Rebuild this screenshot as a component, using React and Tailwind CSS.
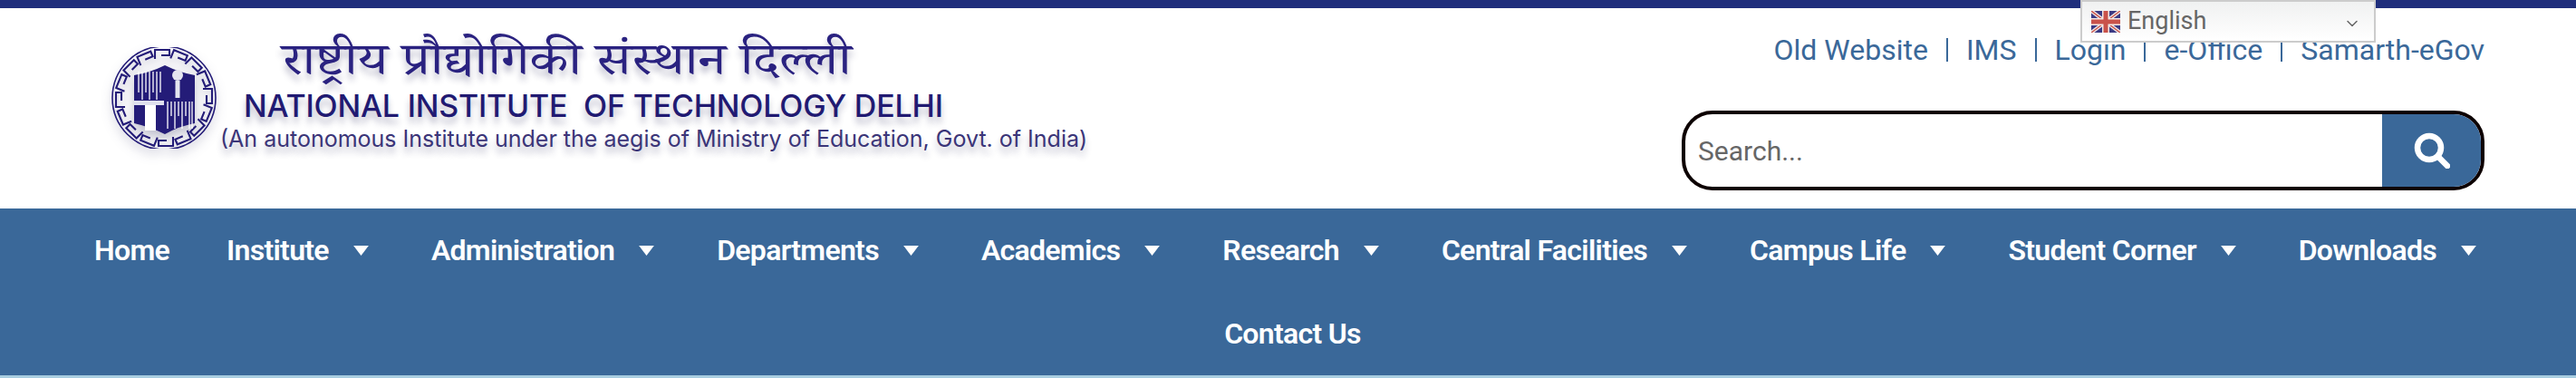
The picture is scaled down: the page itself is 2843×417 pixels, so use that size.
import React from 'react';
import { ChevronDown } from 'lucide-react';

const topLinks = ['Old Website', 'IMS', 'Login', 'e-Office', 'Samarth-eGov'];

const menu = [
  { label: 'Home' },
  { label: 'Institute', sub: true },
  { label: 'Administration', sub: true },
  { label: 'Departments', sub: true },
  { label: 'Academics', sub: true },
  { label: 'Research', sub: true },
  { label: 'Central Facilities', sub: true },
  { label: 'Campus Life', sub: true },
  { label: 'Student Corner', sub: true },
  { label: 'Downloads', sub: true },
  { label: 'Contact Us', last: true },
];

const keys = Array.from({ length: 16 }, (_, i) => i * 22.5);

const Emblem = () => (
  <svg viewBox="0 0 118 112" preserveAspectRatio="none" className="w-[118px] h-[112px] shrink-0 drop-shadow-[0_6px_6px_rgba(40,40,90,0.3)]">
    <g transform="translate(59 56)" fill="none" stroke="#241c78" strokeWidth="2.1">
      <circle r="57" strokeWidth="1.6" />
      {keys.map((deg) => (
        <path key={deg} transform={`rotate(${deg})`} d="M-10 -43 L-10 -53 L6 -53 L6 -47 L-3 -47" />
      ))}
    </g>
    {/* building */}
    <path d="M26 31 Q44 28 60 20 Q76 28 93 31 L93 84 Q76 87 60 96 Q44 88 26 84 Z" fill="#241c78" />
    <g stroke="#fff" strokeWidth="1.3">
      {[31, 35, 39, 43, 47, 51, 55].map((x) => (
        <line key={x} x1={x} y1="27" x2={x} y2={x % 8 === 3 ? 58 : 50} />
      ))}
      {[63, 67, 71, 75, 79, 83, 87, 90].map((x) => (
        <line key={x} x1={x} y1="60" x2={x} y2={x % 8 === 3 ? 76 : 90} />
      ))}
    </g>
    <rect x="26" y="59" width="33" height="5" fill="#dfe0ee" />
    <rect x="38" y="64" width="12" height="28" fill="#fff" />
    <circle cx="74" cy="31" r="6" fill="#e4e5ef" />
    <rect x="71.5" y="37" width="5" height="19" fill="#e4e5ef" />
  </svg>
);

const UkFlag = () => (
  <svg viewBox="0 0 32 24" className="w-8 h-6 shrink-0">
    <rect width="32" height="24" fill="#3b3a84" />
    <path d="M0 0 L32 24 M32 0 L0 24" stroke="#f1e9e6" strokeWidth="4" />
    <path d="M0 0 L32 24 M32 0 L0 24" stroke="#c9524a" strokeWidth="1.4" />
    <path d="M16 0 V24 M0 12 H32" stroke="#f1e9e6" strokeWidth="8" />
    <path d="M16 0 V24 M0 12 H32" stroke="#c9524a" strokeWidth="5" />
  </svg>
);

const Caret = () => (
  <svg viewBox="0 0 20 14" className="w-[19px] h-[13px] ml-[26px] mr-[5px] shrink-0">
    <path d="M1 1 H19 L10 13 Z" fill="#fff" />
  </svg>
);

// solid magnifier, heavier than the lucide one
const SearchGlyph = () => (
  <svg viewBox="0 0 40 40" className="w-[40px] h-[40px]">
    <circle cx="17" cy="17" r="13" fill="none" stroke="#fff" strokeWidth="6.5" />
    <path d="M27 27 L37 37" stroke="#fff" strokeWidth="6.5" strokeLinecap="round" />
  </svg>
);

const App = () => {
  return (
    <div className="relative w-full h-[417px] overflow-hidden bg-white font-['Roboto',sans-serif]">
      {/* language picker */}
      <div className="absolute top-0 left-[2296px] w-[326px] h-[47px] flex items-center pl-[10px] pr-[14px] border-2 border-[#cccccc] bg-gradient-to-b from-[#f0f1f1] to-white text-[#666666] text-[27px] z-10">
        <UkFlag />
        <span className="ml-2 flex-1">English</span>
        <ChevronDown className="w-[20px] h-[20px] mt-1" strokeWidth={1.8} />
      </div>

      <div className="h-[9px] bg-[#1f2e7c]" />

      <header className="h-[221px] flex justify-between pl-[122px] pr-[101px]">
        <div className="flex items-start pt-[43px]">
          <Emblem />
          <div className="flex flex-col items-start ml-[3px] -mt-[3px] [text-shadow:0_7px_7px_rgba(40,40,90,0.3)]">
            <div className="ml-[68px] h-[50px] leading-[50px] text-[50px] text-[#2a2280] whitespace-nowrap origin-left scale-x-[1.2] font-['Noto_Serif_Devanagari','Noto_Sans_Devanagari','Noto_Sans','DejaVu_Sans',serif]">
              राष्ट्रीय प्रौद्योगिकी संस्थान दिल्ली
            </div>
            <div className="ml-[26px] -mt-[1px] h-[38px] leading-[38px] text-[34px] tracking-[-0.2px] font-medium text-[#211a72] font-['Inter',sans-serif] whitespace-pre">
              NATIONAL INSTITUTE  OF TECHNOLOGY DELHI
            </div>
            <div className="h-[34px] leading-[34px] text-[25px] text-[#3b3578] font-['Inter',sans-serif] whitespace-nowrap">
              (An autonomous Institute under the aegis of Ministry of Education, Govt. of India)
            </div>
          </div>
        </div>

        <div className="flex flex-col items-end w-[886px]">
          <div className="flex items-center h-[40px] mt-[26px] text-[32px] text-[#3a6899]">
            {topLinks.map((link, i) => (
              <React.Fragment key={link}>
                {i > 0 && <span className="mx-[20px] w-[2px] h-[26px] bg-[#3a6899]" />}
                <span>{link}</span>
              </React.Fragment>
            ))}
          </div>
          <div className="mt-[47px] w-full h-[88px] flex border-4 border-[#0d0000] rounded-[34px] overflow-hidden">
            <div className="flex-1 flex items-center pl-[14px] text-[30px] text-[#666666]">Search...</div>
            <div className="w-[109px] bg-[#3a6899] flex items-center justify-center">
              <SearchGlyph />
            </div>
          </div>
        </div>
      </header>

      <nav className="h-[187px] bg-[#3a6899] border-b-[3px] border-[#a8cde0] flex flex-wrap justify-center content-start">
        {menu.map((item) => (
          <div key={item.label} className={`h-[92px] flex items-center px-[31.5px] text-[32px] font-semibold tracking-[-0.7px] text-white whitespace-nowrap ${item.last ? 'ml-[10px]' : ''}`}>
            <span>{item.label}</span>
            {item.sub && <Caret />}
          </div>
        ))}
      </nav>
    </div>
  );
};

export default App;
